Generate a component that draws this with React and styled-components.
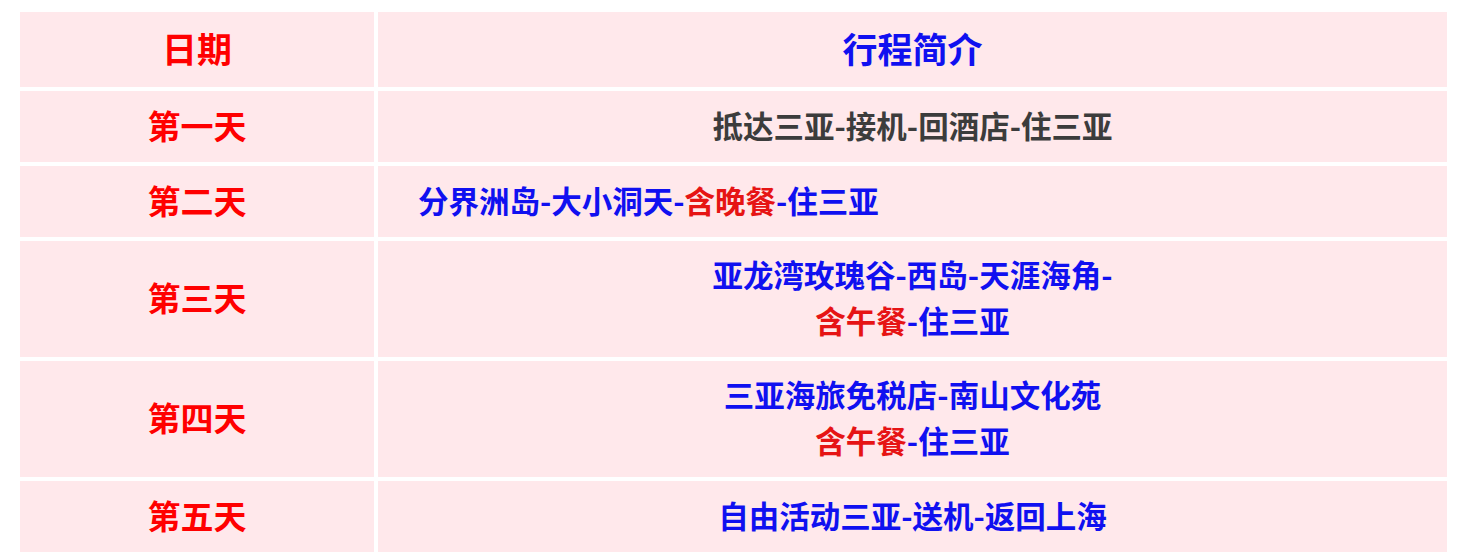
import React from 'react'
import styled, { createGlobalStyle } from 'styled-components'

const GlobalStyle = createGlobalStyle`
  html, body {
    margin: 0;
    padding: 0;
    background: #fff;
  }
  body {
    font-family: "Noto Sans CJK SC", "Noto Sans", sans-serif;
  }
`

const Page = styled.div`
  padding: 12px 30px 0 20px;
`

const Table = styled.div`
  display: grid;
  grid-template-columns: 354px 1fr;
  gap: 4px;
  width: 1427px;
`

const Cell = styled.div`
  background: #ffe8eb;
  display: flex;
  flex-direction: column;
  align-items: ${p => (p.$left ? 'flex-start' : 'center')};
  justify-content: center;
  text-align: center;
  padding: ${p => (p.$head ? '12px 0 16px' : '10px 0 14px')};
  padding-left: ${p => (p.$left ? '40px' : '0')};
  min-height: 47px;
  box-sizing: content-box;
`

const DayText = styled.span`
  color: #ff0000;
  font-size: 33px;
  font-weight: 700;
  line-height: 46px;
`

const HeadText = styled.span`
  color: ${p => p.$color};
  font-size: 35px;
  font-weight: 700;
  line-height: 47px;
`

const Line = styled.div`
  color: ${p => (p.$gray ? '#3c3c3c' : '#1010f0')};
  font-size: 30.5px;
  font-weight: 700;
  line-height: 46px;
  white-space: nowrap;
`

const Meal = styled.span`
  color: #e61414;
`

const rows = [
  {
    day: '第一天',
    lines: [<Line key="a" $gray>抵达三亚-接机-回酒店-住三亚</Line>],
  },
  {
    day: '第二天',
    left: true,
    lines: [
      <Line key="a">
        分界洲岛-大小洞天-<Meal>含晚餐</Meal>-住三亚
      </Line>,
    ],
  },
  {
    day: '第三天',
    lines: [
      <Line key="a">亚龙湾玫瑰谷-西岛-天涯海角-</Line>,
      <Line key="b">
        <Meal>含午餐</Meal>-住三亚
      </Line>,
    ],
  },
  {
    day: '第四天',
    lines: [
      <Line key="a">三亚海旅免税店-南山文化苑</Line>,
      <Line key="b">
        <Meal>含午餐</Meal>-住三亚
      </Line>,
    ],
  },
  {
    day: '第五天',
    lines: [<Line key="a">自由活动三亚-送机-返回上海</Line>],
  },
]

export default function App() {
  return (
    <Page>
      <GlobalStyle />
      <Table>
        <Cell $head>
          <HeadText $color="#ff0000">日期</HeadText>
        </Cell>
        <Cell $head>
          <HeadText $color="#1010f0">行程简介</HeadText>
        </Cell>
        {rows.map(r => (
          <React.Fragment key={r.day}>
            <Cell>
              <DayText>{r.day}</DayText>
            </Cell>
            <Cell $left={r.left}>{r.lines}</Cell>
          </React.Fragment>
        ))}
      </Table>
    </Page>
  )
}
